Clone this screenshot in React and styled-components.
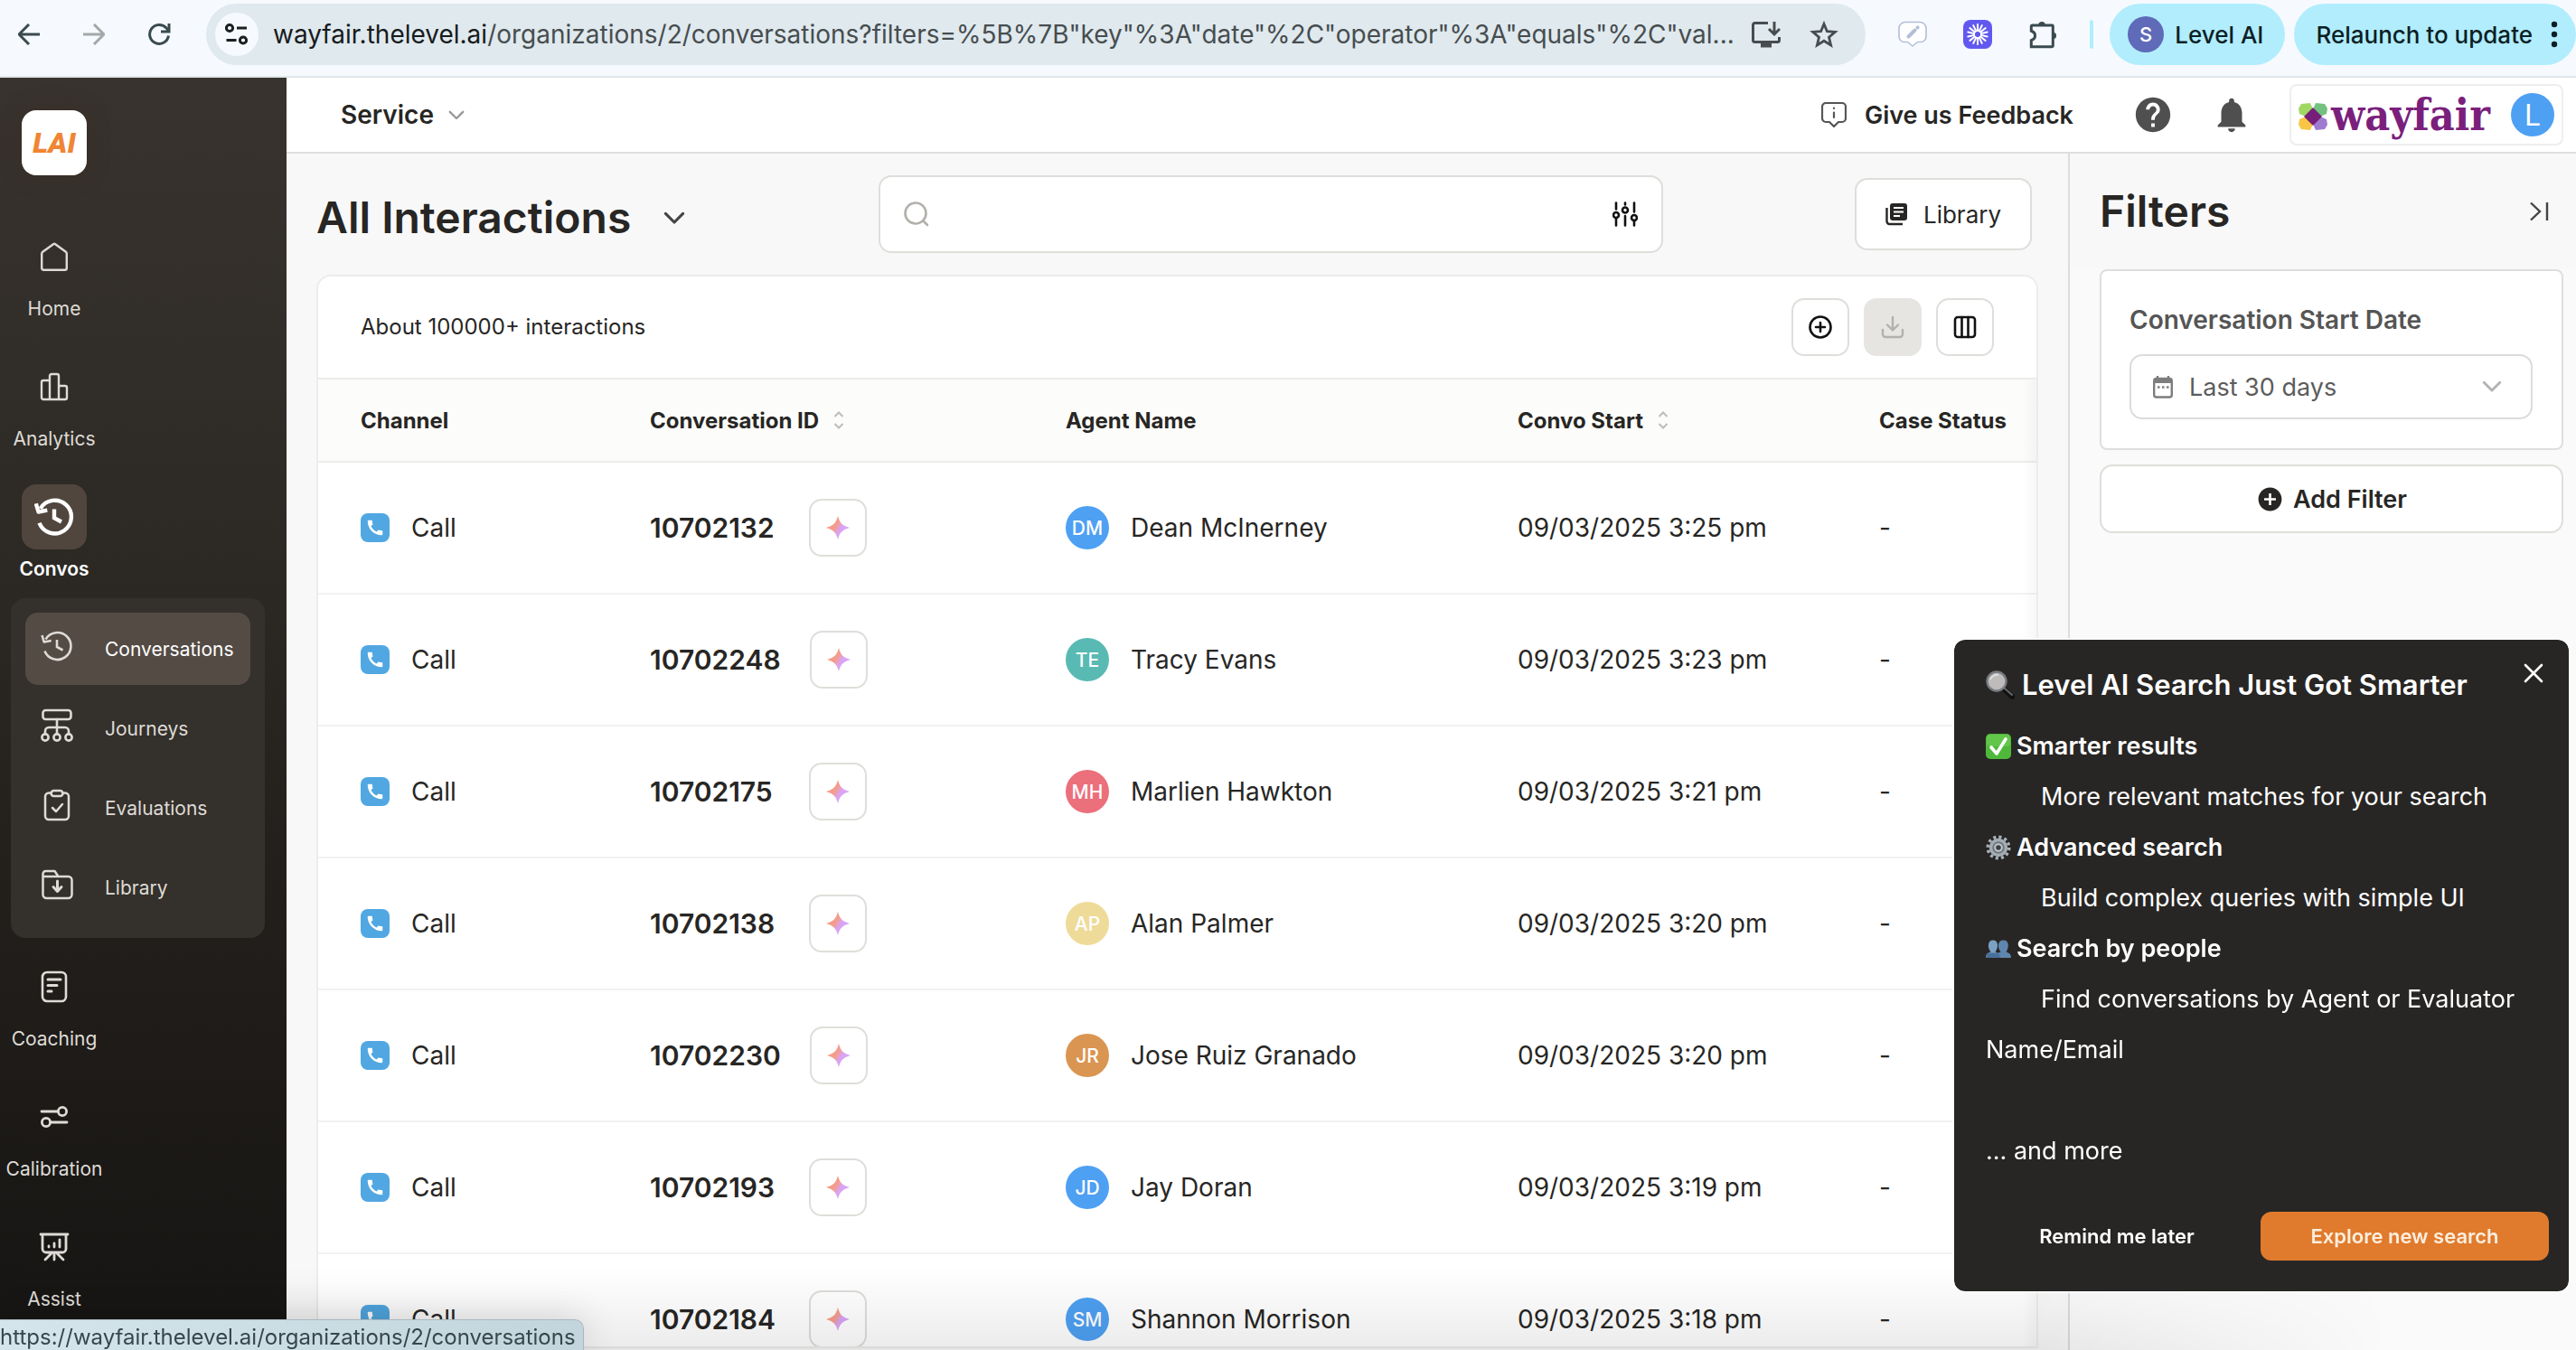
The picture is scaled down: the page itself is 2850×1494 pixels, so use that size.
import React from 'react';
import styled, { createGlobalStyle, css } from 'styled-components';
import { MdHelp, MdNotifications, MdAddCircle, MdCall } from 'react-icons/md';

const GlobalStyle = createGlobalStyle`
  *, *::before, *::after { box-sizing: border-box; }
  html, body { margin: 0; padding: 0; }
  body {
    font-family: Inter, 'Noto Sans', sans-serif;
    font-size: 28px;
    color: #272624;
    background: #f8f8f8;
    overflow: hidden;
  }
  button, input, select { font: inherit; color: inherit; }
  button { cursor: pointer; }
`;

const plainButton = css`
  display: inline-flex;
  align-items: center;
  justify-content: center;
  padding: 0;
  border: 0;
  background: none;
`;

const stroke = {
  fill: 'none',
  stroke: 'currentColor',
  strokeLinecap: 'round',
  strokeLinejoin: 'round',
};

/* ---------- layout ---------- */

const Page = styled.div`
  height: 100vh;
  display: flex;
  flex-direction: column;
  overflow: hidden;
`;

const Body = styled.div`
  flex: 1;
  min-height: 0;
  display: flex;
`;

const Workspace = styled.div`
  flex: 1;
  min-width: 0;
  display: flex;
  flex-direction: column;
`;

const Columns = styled.div`
  flex: 1;
  min-height: 0;
  display: flex;
`;

/* ---------- browser bar ---------- */

const BrowserBar = styled.header`
  display: flex;
  align-items: center;
  height: 86px;
  padding: 0 0 8px 20px;
  background: #f6fafe;
  border-bottom: 2px solid #dfe7ea;
  flex: none;
`;

const NavButtons = styled.div`
  display: flex;
  gap: 48px;
  margin-right: 40px;
`;

const ChromeButton = styled.button`
  ${plainButton}
  width: 24px;
  height: 32px;
  color: ${(p) => (p.$muted ? '#a3a8a8' : '#3a4b50')};
  svg { flex: none; }
`;

const AddressBar = styled.div`
  flex: 1;
  min-width: 0;
  height: 68px;
  padding: 0 30px 0 10px;
  display: flex;
  align-items: center;
  gap: 16px;
  border-radius: 34px;
  background: #dfe9ee;
`;

const SiteInfo = styled.button`
  ${plainButton}
  width: 48px;
  height: 48px;
  border-radius: 50%;
  background: #f6fafe;
  color: #1b1f20;
  flex: none;
`;

const Address = styled.span`
  flex: 1;
  min-width: 0;
  overflow: hidden;
  white-space: nowrap;
  font-size: 28px;
  line-height: 36px;
  color: #474d4f;
  b { font-weight: 400; color: #171b1c; }
`;

const AddressTools = styled.div`
  display: flex;
  align-items: center;
  gap: 32px;
  color: #474d4f;
`;

const ToolButton = styled.button`
  ${plainButton}
  width: 32px;
  height: 32px;
  color: ${(p) => p.$color || 'inherit'};
`;

const Extensions = styled.div`
  display: flex;
  align-items: center;
  gap: 40px;
  margin: 0 18px 0 36px;
`;

const BarDivider = styled.span`
  width: 4px;
  height: 32px;
  margin-left: -4px;
  border-radius: 2px;
  background: #b1edfd;
`;

const ChromePill = styled.button`
  ${plainButton}
  height: 68px;
  padding: 0 24px 0 20px;
  gap: 12px;
  border-radius: 34px;
  background: #b1edfd;
  color: #0c1f25;
  font-size: 26px;
  font-weight: 500;
  white-space: nowrap;
  flex: none;
  & + & { margin-left: 10px; padding: 0 20px 0 24px; gap: 20px; }
`;

const ProfileDot = styled.span`
  width: 40px;
  height: 40px;
  border-radius: 50%;
  background: #5f6ab8;
  color: #fff;
  font-size: 22px;
  line-height: 40px;
  text-align: center;
`;

/* ---------- sidebar ---------- */

const Sidebar = styled.nav`
  width: 317px;
  flex: none;
  padding-top: 36px;
  overflow: hidden;
  background: linear-gradient(#38332e, #2b2823 42%, #231f1c 62%, #161513);
`;

const BrandLink = styled.a`
  display: flex;
  align-items: center;
  justify-content: center;
  width: 72px;
  height: 72px;
  margin: 0 0 54px 24px;
  border-radius: 16px;
  background: #fff;
  color: #f08534;
  font-family: Roboto, 'Liberation Sans', sans-serif;
  font-weight: 900;
  font-style: italic;
  font-size: 32px;
  line-height: 40px;
  text-decoration: none;
  box-shadow: 0 0 24px rgba(70, 40, 30, 0.35);
`;

const NavItem = styled.a`
  display: flex;
  flex-direction: column;
  align-items: center;
  width: 120px;
  height: 126px;
  margin-bottom: ${(p) => (p.$active ? '0' : '18px')};
  color: ${(p) => (p.$active ? '#fff' : '#dedbd6')};
  font-size: 21px;
  font-weight: ${(p) => (p.$active ? 600 : 400)};
  line-height: 44px;
  text-decoration: none;
`;

const NavIcon = styled.span`
  display: flex;
  align-items: center;
  justify-content: center;
  width: 72px;
  height: 72px;
  border-radius: 16px;
  background: ${(p) => (p.$active ? '#50463d' : 'transparent')};
`;

const SubMenu = styled.div`
  display: flex;
  flex-direction: column;
  gap: 8px;
  width: 281px;
  height: 376px;
  margin: 0 0 18px 12px;
  padding: 16px;
  border-radius: 16px;
  background: #34302b;
`;

const SubItem = styled.a`
  display: flex;
  align-items: center;
  height: 80px;
  padding-left: 17px;
  gap: 35px;
  border-radius: 14px;
  background: ${(p) => (p.$active ? '#544b44' : 'transparent')};
  color: ${(p) => (p.$active ? '#fff' : '#dedbd6')};
  font-size: 21px;
  text-decoration: none;
  svg { color: #dedbd6; flex: none; margin-bottom: 6px; }
`;

/* ---------- top bar ---------- */

const TopBar = styled.header`
  display: flex;
  align-items: center;
  height: 84px;
  padding: 0 14px 0 60px;
  background: #fff;
  border-bottom: 2px solid #dfdfdf;
  flex: none;
`;

const Switcher = styled.button`
  ${plainButton}
  gap: 16px;
  font-weight: 600;
  margin-right: auto;
  color: #272624;
  svg { color: #999; }
`;

const Feedback = styled.button`
  ${plainButton}
  gap: 20px;
  margin-right: 65px;
  font-size: 27px;
  font-weight: 600;
  svg { color: #555; }
`;

const RoundTool = styled.button`
  ${plainButton}
  width: 46px;
  height: 46px;
  margin-right: 41px;
  color: #4f4f4f;
`;

const OrgBadge = styled.button`
  ${plainButton}
  justify-content: space-between;
  width: 303px;
  height: 68px;
  padding: 0 8px;
  border: 2px solid #eee;
  border-radius: 8px;
  background: #fff;
`;

const OrgLogo = styled.span`
  display: flex;
  align-items: center;
  gap: 4px;
  color: #7b1f7d;
  font-family: 'DejaVu Serif Condensed', 'DejaVu Serif', serif;
  font-weight: 700;
  font-size: 48px;
  line-height: 48px;
  svg { flex: none; margin-top: 4px; }
`;

const Avatar = styled.span`
  display: inline-flex;
  align-items: center;
  justify-content: center;
  width: 48px;
  height: 48px;
  border-radius: 50%;
  flex: none;
  background: ${(p) => p.$color};
  color: #fff;
  font-size: ${(p) => (p.$large ? '32px' : '21px')};
  font-weight: ${(p) => (p.$large ? 400 : 500)};
`;

/* ---------- main ---------- */

const Main = styled.main`
  flex: 1;
  min-width: 0;
  display: flex;
  flex-direction: column;
  padding: 24px 33px 0;
  background: #f8f8f8;
`;

const TitleRow = styled.div`
  display: grid;
  grid-template-columns: 622px minmax(300px, 868px) 1fr;
  align-items: center;
  height: 86px;
  margin-bottom: 24px;
  flex: none;
`;

const PageTitle = styled.h1`
  display: flex;
  align-items: center;
  gap: 36px;
  margin: 8px 0 0;
  font-size: 48px;
  line-height: 60px;
  font-weight: 600;
`;

const ChevronButton = styled.button`
  ${plainButton}
  color: #444;
`;

const SearchBox = styled.div`
  display: flex;
  align-items: center;
  height: 86px;
  padding: 0 26px;
  gap: 16px;
  border: 2px solid #dfdeda;
  border-radius: 14px;
  background: #fff;
  color: #b3b0ac;
  input {
    flex: 1;
    min-width: 0;
    border: 0;
    outline: 0;
    background: none;
    color: #272624;
  }
`;

const IconOnly = styled.button`
  ${plainButton}
  color: #111;
`;

const LibraryButton = styled.button`
  ${plainButton}
  justify-self: end;
  width: 196px;
  height: 80px;
  margin-right: 7px;
  gap: 18px;
  border: 2px solid #dfdeda;
  border-radius: 14px;
  background: #fff;
  font-size: 26px;
`;

const Card = styled.section`
  flex: 1;
  min-height: 0;
  position: relative;
  margin-bottom: 2px;
  overflow: hidden;
  border: 2px solid #ececea;
  border-radius: 16px 16px 0 0;
  background: #fff;
  &::after {
    content: '';
    position: absolute;
    top: 114px;
    right: 0;
    bottom: 0;
    width: 16px;
    background: linear-gradient(to right, rgba(0, 0, 0, 0), rgba(0, 0, 0, 0.03));
  }
`;

const CardTools = styled.div`
  display: flex;
  align-items: center;
  gap: 16px;
  height: 112px;
  padding: 0 47px;
  p { margin: 0 auto 0 0; font-size: 24px; line-height: 32px; }
`;

const SquareButton = styled.button`
  ${plainButton}
  width: 64px;
  height: 64px;
  flex: none;
  border: 2px solid ${(p) => (p.disabled ? '#e6e5e1' : '#dfdeda')};
  border-radius: 14px;
  background: ${(p) => (p.disabled ? '#e6e5e1' : '#fff')};
  color: ${(p) => (p.disabled ? '#b3b1ad' : '#111')};
`;

const Table = styled.table`
  width: 100%;
  table-layout: fixed;
  border-collapse: separate;
  border-spacing: 0;
  th, td {
    padding: 0 0 0 16px;
    text-align: left;
    white-space: nowrap;
  }
  th:first-child, td:first-child { padding-left: 47px; }
  th {
    height: 94px;
    border-top: 2px solid #ececea;
    border-bottom: 2px solid #ececea;
    background: #fcfcfa;
    font-size: 24px;
    font-weight: 700;
  }
  td {
    height: 146px;
    border-bottom: 2px solid #f2f2f1;
  }
`;

const Col = styled.col`
  width: ${(p) => p.$w};
`;

const Cell = styled.div`
  display: flex;
  align-items: center;
  gap: ${(p) => p.$gap || 24}px;
`;

const PhoneTile = styled.span`
  display: inline-flex;
  align-items: center;
  justify-content: center;
  width: 32px;
  height: 32px;
  border-radius: 8px;
  background: #51a7e1;
  color: #fff;
`;

const IdText = styled.span`
  min-width: 144px;
  font-size: 30px;
  font-weight: 600;
`;

/* ---------- filters ---------- */

const FilterPanel = styled.aside`
  width: 562px;
  flex: none;
  border-left: 2px solid #dcdcdc;
  background: #fafafa;
`;

const PanelHead = styled.div`
  display: flex;
  align-items: center;
  justify-content: space-between;
  height: 128px;
  padding: 0 30px 0 33px;
  background: #f8f8f8;
  color: #6a6a6a;
  h2 {
    margin: 0;
    font-size: 48px;
    line-height: 60px;
    font-weight: 600;
    color: #272624;
  }
`;

const PanelBody = styled.div`
  display: flex;
  flex-direction: column;
  gap: 16px;
  padding: 0 14px 0 33px;
`;

const FilterCard = styled.div`
  padding: 36px 32px 24px 31px;
  height: 200px;
  border: 2px solid #dedede;
  border-radius: 8px;
  background: #fff;
  label {
    display: block;
    margin-bottom: 20px;
    font-size: 28px;
    line-height: 36px;
    font-weight: 600;
    color: #555;
  }
`;

const SelectWrap = styled.div`
  display: grid;
  grid-template-columns: 46px 1fr 34px;
  align-items: center;
  height: 72px;
  border: 2px solid #dcdcdc;
  border-radius: 14px;
  color: #b3b3b3;
  > svg { grid-row: 1; pointer-events: none; }
  > svg:first-of-type { grid-column: 1; justify-self: end; color: #7d7d7d; }
  > svg:last-of-type { grid-column: 3; justify-self: start; margin-left: -20px; }
  select {
    grid-row: 1;
    grid-column: 1 / -1;
    width: 100%;
    height: 100%;
    padding: 0 50px 0 64px;
    border: 0;
    background: none;
    appearance: none;
    font-size: 27px;
    color: #5c5c5c;
  }
`;

const AddFilter = styled.button`
  ${plainButton}
  height: 76px;
  gap: 10px;
  border: 2px solid #dfdeda;
  border-radius: 14px;
  background: #fff;
  font-size: 27px;
  font-weight: 600;
`;

/* ---------- overlays ---------- */

const Announcement = styled.aside`
  position: fixed;
  right: 8px;
  bottom: 65px;
  width: 680px;
  padding: 28px 22px 34px 35px;
  border-radius: 12px;
  background: #282624;
  color: #fff;
  outline: 2px solid rgba(255, 255, 255, 0.8);
`;

const AnnounceTitle = styled.h3`
  display: flex;
  align-items: center;
  gap: 8px;
  margin: 0 0 18px;
  font-size: 31px;
  line-height: 44px;
  font-weight: 600;
`;

const CloseButton = styled.button`
  ${plainButton}
  position: absolute;
  top: 24px;
  right: 26px;
  width: 26px;
  height: 26px;
`;

const Feature = styled.h4`
  display: flex;
  align-items: center;
  gap: 6px;
  margin: 0;
  font-size: 27px;
  line-height: 56px;
  font-weight: 600;
`;

const Detail = styled.p`
  margin: 0;
  font-size: 27px;
  font-weight: 400;
  line-height: 56px;
  text-indent: ${(p) => (p.$flush ? '0' : '61px')};
`;

const Actions = styled.div`
  display: flex;
  align-items: center;
  justify-content: flex-end;
  gap: 28px;
  margin-top: 39px;
`;

const Action = styled.button`
  ${plainButton}
  width: ${(p) => (p.$primary ? '319px' : '262px')};
  height: 54px;
  border-radius: 12px;
  background: ${(p) => (p.$primary ? '#e07b2d' : 'transparent')};
  color: ${(p) => (p.$primary ? '#fdeede' : '#fff')};
  font-size: 22px;
  font-weight: 600;
`;

const StatusBubble = styled.div`
  position: fixed;
  left: 0;
  bottom: 0;
  height: 34px;
  padding-right: 8px;
  border-top: 1px solid #a9b8be;
  border-right: 1px solid #a9b8be;
  border-top-right-radius: 10px;
  background: linear-gradient(to right, #d4e6ec, #c3d5dc);
  color: #37474c;
  font-size: 24px;
  line-height: 38px;
  white-space: nowrap;
  box-shadow: 0 0 40px rgba(0, 0, 0, 0.16);
`;

const BottomShade = styled.div`
  position: fixed;
  left: 317px;
  right: 0;
  bottom: 0;
  height: 90px;
  pointer-events: none;
  background: linear-gradient(rgba(0, 0, 0, 0), rgba(0, 0, 0, 0.08));
  mask-image: linear-gradient(to right, #000 76%, transparent 92%);
`;

/* ---------- icons ---------- */

const Chevron = ({ w = 18, sw = 2.6 }) => (
  <svg width={w} height={w * 0.6} viewBox="0 0 20 12" {...stroke} strokeWidth={sw}>
    <path d="M2 2l8 8 8-8" />
  </svg>
);

const BackIcon = ({ flip }) => (
  <svg width="24" height="24" viewBox="0 0 24 24" fill="none" stroke="currentColor" strokeWidth="3">
    {flip ? <path d="M0 12h22M12 1l11 11-11 11" /> : <path d="M24 12H2M12 1L1 12l11 11" />}
  </svg>
);

const ReloadIcon = () => (
  <svg width="26" height="26" viewBox="0 0 26 26" fill="none" stroke="currentColor" strokeWidth="3">
    <path d="M23.5 14.5A10.5 10.5 0 1 1 21 6l2.500 2.500M24 1v9h-9" />
  </svg>
);

const TuneIcon = () => (
  <svg width="26" height="26" viewBox="0 0 26 26" fill="none" stroke="currentColor" strokeWidth="3">
    <circle cx="5" cy="6" r="3.600" />
    <path d="M13 6h11M1.500 19.500h11" />
    <circle cx="20" cy="19.500" r="3.600" />
  </svg>
);

const InstallIcon = () => (
  <svg width="32" height="32" viewBox="0 0 32 32" fill="none" stroke="currentColor" strokeWidth="3">
    <path d="M18 3.500H3.500a2 2 0 0 0-2 2v17a2 2 0 0 0 2 2h25a2 2 0 0 0 2-2V19M25 2v13M19 10l6 6 6-6" />
    <path d="M10 28h12" strokeWidth="5" />
  </svg>
);

const StarIcon = () => (
  <svg width="32" height="32" viewBox="0 0 32 32" fill="none" stroke="currentColor" strokeWidth="2.800">
    <path d="M16 4.500l3.400 8.200 8.900.700-6.800 5.800 2.100 8.700L16 23.200l-7.600 4.700 2.100-8.700-6.800-5.800 8.900-.700z" />
  </svg>
);

const PencilBubble = () => (
  <svg width="32" height="32" viewBox="0 0 32 32" {...stroke} strokeWidth="1.600">
    <path fill="#fff" d="M8 2.500h16a7 7 0 0 1 7 7v9a6 6 0 0 1-6 6h-3.500L16 29l-5.500-4.500H7a6 6 0 0 1-6-6v-9a7 7 0 0 1 7-7z" />
    <path d="M11.500 18.500l7-7" strokeWidth="4" />
    <path d="M21.500 8.500l.1-.1" strokeWidth="4" />
  </svg>
);

const BurstIcon = () => (
  <svg width="32" height="32" viewBox="0 0 32 32">
    <rect width="32" height="32" rx="8" fill="#6159ef" />
    {Array.from({ length: 14 }, (_, i) => (
      <path key={i} d="M16 5v7" stroke="#fff" strokeWidth="2" strokeLinecap="round" transform={`rotate(${(i * 360) / 14} 16 16)`} />
    ))}
    <circle cx="16" cy="16" r="4.200" fill="none" stroke="#fff" strokeWidth="1.800" />
  </svg>
);

const PuzzleIcon = () => (
  <svg width="34" height="34" viewBox="0 0 34 34" fill="none" stroke="currentColor" strokeWidth="3.200">
    <path d="M5 6.500h23a1 1 0 0 1 1 1v23a1 1 0 0 1-1 1H3.500V24c3-1 4.500-3 4.500-5.500S6.500 14 3.500 13V8a1.500 1.500 0 0 1 1.500-1.500z" />
    <path d="M12 6a4 4 0 0 1 8 0zM29 14.500a4 4 0 0 1 0 8z" fill="currentColor" stroke="none" />
  </svg>
);

const DotsIcon = () => (
  <svg width="8" height="32" viewBox="0 0 8 32" fill="currentColor">
    <circle cx="4" cy="5" r="3.200" /><circle cx="4" cy="16" r="3.200" /><circle cx="4" cy="27" r="3.200" />
  </svg>
);

const HomeIcon = () => (
  <svg width="34" height="34" viewBox="0 0 34 34" {...stroke} strokeWidth="2.400">
    <path d="M3.200 13.500a2 2 0 0 1 1-1.700L16 3.200a2 2 0 0 1 2.200 0l11.700 8.600a2 2 0 0 1 .9 1.700v16.300a2 2 0 0 1-2 2H5.200a2 2 0 0 1-2-2z" />
  </svg>
);

const BarsIcon = () => (
  <svg width="34" height="34" viewBox="0 0 34 34" {...stroke} strokeWidth="2.400">
    <path d="M12 31H5a2 2 0 0 1-2-2V12a2 2 0 0 1 2-2h7M12 31V5a2 2 0 0 1 2-2h6a2 2 0 0 1 2 2v26zM22 16h7a2 2 0 0 1 2 2v11a2 2 0 0 1-2 2h-7" />
  </svg>
);

const HistoryIcon = ({ size = 36, sw = 2.6 }) => (
  <svg width={size} height={size} viewBox="0 0 36 36" fill="none" stroke="currentColor" strokeWidth={sw}>
    <path d="M4.500 23.500A15 15 0 1 0 5.500 10.500" />
    <path d="M1.500 6l2.200 7.500 8-1.500" strokeLinejoin="round" />
    <path d="M18 11v8l6.500 3.500" />
  </svg>
);

const JourneyIcon = () => (
  <svg width="36" height="38" viewBox="0 0 36 38" {...stroke} strokeWidth="2.600">
    <rect x="2.500" y="2" width="31" height="10" rx="3" />
    <path d="M18 12v16M5 28v-3a4 4 0 0 1 4-4h18a4 4 0 0 1 4 4v3" />
    <circle cx="5" cy="32" r="3.600" /><circle cx="18" cy="32" r="3.600" /><circle cx="31" cy="32" r="3.600" />
  </svg>
);

const ClipboardIcon = () => (
  <svg width="36" height="36" viewBox="0 0 36 36" {...stroke} strokeWidth="2.500">
    <path d="M12 4.500H9a4 4 0 0 0-4 4V30a4 4 0 0 0 4 4h18a4 4 0 0 0 4-4V8.500a4 4 0 0 0-4-4h-3" />
    <rect x="11.500" y="2" width="13" height="6" rx="3" />
    <path d="M13 21l4 4 7-8" />
  </svg>
);

const FolderIcon = () => (
  <svg width="36" height="34" viewBox="0 0 36 34" {...stroke} strokeWidth="2.500">
    <path d="M2.500 28V5a3 3 0 0 1 3-3h10l4 6h11a4 4 0 0 1 4 4v16a4 4 0 0 1-4 4h-24a4 4 0 0 1-4-4zM2.500 8h17" />
    <path d="M18.500 13v10M14 19.500l4.500 5 4.500-5" strokeWidth="3" />
  </svg>
);

const DocIcon = () => (
  <svg width="30" height="36" viewBox="0 0 30 36" {...stroke} strokeWidth="2.600">
    <rect x="2" y="2" width="26" height="32" rx="5" />
    <path d="M8 10h14M8 16.500h10M8 23h4" strokeWidth="3" />
  </svg>
);

const CalibrateIcon = () => (
  <svg width="32" height="28" viewBox="0 0 32 28" {...stroke} strokeWidth="2.800">
    <path d="M2 8h18M12 20h18" />
    <circle cx="25" cy="8" r="4.600" /><circle cx="7" cy="20" r="4.600" />
  </svg>
);

const BoardIcon = () => (
  <svg width="34" height="36" viewBox="0 0 34 36" {...stroke} strokeWidth="2.800">
    <path d="M2 4h30M4 4v16a4 4 0 0 0 4 4h18a4 4 0 0 0 4-4V4M17 24v8M14 25l-7 7M20 25l7 7" />
    <path d="M11 18v-1M17 18v-4M23 18V10" />
  </svg>
);

const InfoBubble = () => (
  <svg width="28" height="30" viewBox="0 0 28 30" {...stroke} strokeWidth="2.200">
    <path d="M5 2h18a4 4 0 0 1 4 4v13a4 4 0 0 1-4 4h-4l-5 5-5-5H5a4 4 0 0 1-4-4V6a4 4 0 0 1 4-4zM14 12.500v5.500M14 7.500v.5" />
  </svg>
);

const FlowerIcon = () => (
  <svg width="32" height="32" viewBox="0 0 32 32">
    <path d="M3 2l10-1 3 7-8 8-7-3-1-6z" fill="#a1d863" />
    <path d="M29 2L19 1l-3 7 8 8 7-3 1-6z" fill="#73c17f" />
    <path d="M3 30l10 1 3-7-8-8-7 3-1 6z" fill="#f8c644" />
    <path d="M29 30l-10 1-3-7 8-8 7 3 1 6z" fill="#9e7bd0" />
    <path d="M16 6l10 10-10 10L6 16z" fill="#751f78" />
  </svg>
);

const SearchIcon = () => (
  <svg width="28" height="28" viewBox="0 0 28 28" {...stroke} strokeWidth="2.600">
    <circle cx="13" cy="13" r="11.500" /><path d="M21.500 21.500l4.500 4.500" />
  </svg>
);

const SlidersIcon = () => (
  <svg width="28" height="28" viewBox="0 0 28 28" {...stroke} strokeWidth="2.600">
    <path d="M4 1.500v7M4 18v8.500M14 1.500v2M14 16v10.500M24 1.500v10M24 21v5.500" />
    <circle cx="4" cy="15" r="3" /><circle cx="14" cy="9.500" r="3" /><circle cx="24" cy="18" r="3" />
  </svg>
);

const LibraryIcon = () => (
  <svg width="24" height="26" viewBox="0 0 24 26">
    <path d="M1.500 6v15a3 3 0 0 0 3 3H19" fill="none" stroke="#272624" strokeWidth="2.400" />
    <rect x="5" y="1" width="19" height="19" rx="3" fill="#272624" />
    <path d="M9 6h11M9 10.500h11M9 15h7" stroke="#fff" strokeWidth="2" />
  </svg>
);

const PlusCircle = () => (
  <svg width="28" height="28" viewBox="0 0 28 28" {...stroke} strokeWidth="2.600">
    <circle cx="14" cy="14" r="11.500" /><path d="M14 9v10M9 14h10" />
  </svg>
);

const DownloadIcon = () => (
  <svg width="26" height="26" viewBox="0 0 26 26" {...stroke} strokeWidth="2.400">
    <path d="M13 2v14M7 10.500l6 6 6-6M2 16v5a3 3 0 0 0 3 3h16a3 3 0 0 0 3-3v-5" />
  </svg>
);

const ColumnsIcon = () => (
  <svg width="26" height="26" viewBox="0 0 26 26" {...stroke} strokeWidth="2.600">
    <rect x="2" y="2" width="22" height="22" rx="3" /><path d="M9.500 2v22M16.500 2v22" />
  </svg>
);

const SortIcon = () => (
  <svg width="12" height="22" viewBox="0 0 12 22" fill="none" stroke="#bdbdbb" strokeWidth="2">
    <path d="M1.500 7L6 2.500 10.500 7M1.500 15L6 19.500 10.500 15" />
  </svg>
);

const SparkIcon = () => (
  <svg width="26" height="26" viewBox="0 0 26 26">
    <defs>
      <linearGradient id="spark" x1="0.100" y1="0.250" x2="0.900" y2="0.750">
        <stop offset="0.350" stopColor="#f59c88" />
        <stop offset="0.650" stopColor="#d9a4f8" />
      </linearGradient>
    </defs>
    <path d="M13 0c2 7.500 4.500 10.500 13 13-8.500 2.500-11 5.500-13 13-2-7.500-4.500-10.500-13-13 8.500-2.500 11-5.500 13-13z" fill="url(#spark)" />
  </svg>
);

const CollapseIcon = () => (
  <svg width="22" height="22" viewBox="0 0 22 22" fill="none" stroke="currentColor" strokeWidth="2.400">
    <path d="M2 1.500l10 9.500-10 9.500M20 1v20" />
  </svg>
);

const CalendarIcon = () => (
  <svg width="22" height="26" viewBox="0 0 22 26">
    <path d="M5 1v4M17 1v4" stroke="currentColor" strokeWidth="2.400" />
    <rect x="1.200" y="4" width="19.600" height="20.500" rx="2.500" fill="none" stroke="currentColor" strokeWidth="2.400" />
    <path d="M1 4h20v5H1z" fill="currentColor" />
    <path d="M5 13.500h2.500M10 13.500h2.500M15 13.500h2.500" stroke="currentColor" strokeWidth="2.500" />
  </svg>
);

const CloseIcon = () => (
  <svg width="22" height="22" viewBox="0 0 22 22" {...stroke} strokeWidth="2.600">
    <path d="M2 2l18 18M20 2L2 20" />
  </svg>
);

const MagnifierArt = () => (
  <svg width="32" height="32" viewBox="0 0 32 32">
    <path d="M19 19l10 10" stroke="#111" strokeWidth="6" strokeLinecap="round" />
    <path d="M19 18l10 9" stroke="#666" strokeWidth="2" strokeLinecap="round" />
    <circle cx="12" cy="12" r="10.500" fill="#bdbcba" stroke="#777b80" strokeWidth="2.400" />
    <path d="M5 10a8 8 0 0 1 9-5" stroke="#dedede" strokeWidth="2" fill="none" />
  </svg>
);

const CheckArt = () => (
  <svg width="28" height="28" viewBox="0 0 28 28">
    <rect width="28" height="28" rx="5" fill="#4fb83a" />
    <rect x="1" y="1" width="26" height="13" rx="4" fill="#62c64b" />
    <path d="M6 15l6 7L22 6" fill="none" stroke="#fff" strokeWidth="3.600" strokeLinecap="round" strokeLinejoin="round" />
  </svg>
);

const GearArt = () => (
  <svg width="28" height="28" viewBox="0 0 28 28">
    <circle cx="14" cy="14" r="11.800" fill="none" stroke="#a9b3ba" strokeWidth="3.400" strokeDasharray="3.100 3.080" />
    <circle cx="14" cy="14" r="8.500" fill="#6f767c" stroke="#a4adb4" strokeWidth="3.400" />
    <circle cx="14" cy="14" r="3.800" fill="#3a3e42" stroke="#c0c7cc" strokeWidth="2" />
  </svg>
);

const PeopleArt = () => (
  <svg width="28" height="28" viewBox="0 0 28 28">
    <path d="M11 24c0-5 3-5.500 5.500-6.500C12.500 12.500 13 4.500 19.500 4.500s6.500 8 3 13c2.500 1 5.500 1.500 5.500 6.500z" fill="#5f86ae" />
    <path d="M0 24c0-5 3-5.500 5.500-6.500C1.500 12.500 2 4.500 8 4.500s6.500 8 2.500 13c2.500 1 5.500 1.500 5.500 6.500z" fill="#7ba1c4" />
    <path d="M0 24c0-3 1-4.500 3-5.500h10c2 1 3 2.500 3 5.500z" fill="#48709b" />
  </svg>
);

/* ---------- data ---------- */

const navTop = [
  { label: 'Home', icon: <HomeIcon /> },
  { label: 'Analytics', icon: <BarsIcon /> },
  { label: 'Convos', icon: <HistoryIcon size={44} sw={3.6} />, active: true },
];

const subNav = [
  { label: 'Conversations', icon: <HistoryIcon />, active: true },
  { label: 'Journeys', icon: <JourneyIcon /> },
  { label: 'Evaluations', icon: <ClipboardIcon /> },
  { label: 'Library', icon: <FolderIcon /> },
];

const navBottom = [
  { label: 'Coaching', icon: <DocIcon /> },
  { label: 'Calibration', icon: <CalibrateIcon /> },
  { label: 'Assist', icon: <BoardIcon /> },
];

const rows = [
  ['10702132', 'DM', '#4ea0f3', 'Dean McInerney', '09/03/2025 3:25 pm'],
  ['10702248', 'TE', '#59bab3', 'Tracy Evans', '09/03/2025 3:23 pm'],
  ['10702175', 'MH', '#ec6f7c', 'Marlien Hawkton', '09/03/2025 3:21 pm'],
  ['10702138', 'AP', '#efdb99', 'Alan Palmer', '09/03/2025 3:20 pm'],
  ['10702230', 'JR', '#da9552', 'Jose Ruiz Granado', '09/03/2025 3:20 pm'],
  ['10702193', 'JD', '#4ea0f3', 'Jay Doran', '09/03/2025 3:19 pm'],
  ['10702184', 'SM', '#4ea0f3', 'Shannon Morrison', '09/03/2025 3:18 pm'],
];

const NavLink = ({ item }) => (
  <NavItem href="#" $active={item.active}>
    <NavIcon $active={item.active}>{item.icon}</NavIcon>
    {item.label}
  </NavItem>
);

export default function App() {
  return (
    <Page>
      <GlobalStyle />
      <BrowserBar>
        <NavButtons>
          <ChromeButton aria-label="Back"><BackIcon /></ChromeButton>
          <ChromeButton aria-label="Forward" $muted><BackIcon flip /></ChromeButton>
          <ChromeButton aria-label="Reload"><ReloadIcon /></ChromeButton>
        </NavButtons>
        <AddressBar>
          <SiteInfo aria-label="Site information"><TuneIcon /></SiteInfo>
          <Address>
            <b>wayfair.thelevel.ai</b>/organizations/2/conversations?filters=%5B%7B"key"%3A"date"%2C"operator"%3A"equals"%2C"val...
          </Address>
          <AddressTools>
            <ToolButton aria-label="Install app"><InstallIcon /></ToolButton>
            <ToolButton aria-label="Bookmark"><StarIcon /></ToolButton>
          </AddressTools>
        </AddressBar>
        <Extensions>
          <ToolButton aria-label="Notes" $color="#b3bfd6"><PencilBubble /></ToolButton>
          <ToolButton aria-label="Assistant"><BurstIcon /></ToolButton>
          <ToolButton aria-label="Extensions" $color="#3a4b50"><PuzzleIcon /></ToolButton>
          <BarDivider />
        </Extensions>
        <ChromePill><ProfileDot>S</ProfileDot>Level AI</ChromePill>
        <ChromePill>Relaunch to update<DotsIcon /></ChromePill>
      </BrowserBar>

      <Body>
        <Sidebar>
          <BrandLink href="#">LAI</BrandLink>
          {navTop.map((item) => <NavLink key={item.label} item={item} />)}
          <SubMenu>
            {subNav.map((item) => (
              <SubItem key={item.label} href="#" $active={item.active}>
                {item.icon}
                {item.label}
              </SubItem>
            ))}
          </SubMenu>
          {navBottom.map((item) => <NavLink key={item.label} item={item} />)}
        </Sidebar>

        <Workspace>
          <TopBar>
            <Switcher>Service<Chevron /></Switcher>
            <Feedback><InfoBubble />Give us Feedback</Feedback>
            <RoundTool aria-label="Help"><MdHelp size={46} /></RoundTool>
            <RoundTool aria-label="Notifications"><MdNotifications size={46} /></RoundTool>
            <OrgBadge>
              <OrgLogo><FlowerIcon />wayfair</OrgLogo>
              <Avatar $color="#4ea0f3" $large>L</Avatar>
            </OrgBadge>
          </TopBar>

          <Columns>
            <Main>
              <TitleRow>
                <PageTitle>
                  All Interactions
                  <ChevronButton aria-label="Switch view"><Chevron w={24} /></ChevronButton>
                </PageTitle>
                <SearchBox>
                  <SearchIcon />
                  <input type="search" aria-label="Search interactions" />
                  <IconOnly aria-label="Search options"><SlidersIcon /></IconOnly>
                </SearchBox>
                <LibraryButton><LibraryIcon />Library</LibraryButton>
              </TitleRow>

              <Card>
                <CardTools>
                  <p>About 100000+ interactions</p>
                  <SquareButton aria-label="Add"><PlusCircle /></SquareButton>
                  <SquareButton aria-label="Download" disabled><DownloadIcon /></SquareButton>
                  <SquareButton aria-label="Columns"><ColumnsIcon /></SquareButton>
                </CardTools>
                <Table>
                  <colgroup>
                    <Col $w="351px" />
                    <Col $w="460px" />
                    <Col $w="500px" />
                    <Col $w="400px" />
                    <Col $w="auto" />
                  </colgroup>
                  <thead>
                    <tr>
                      <th>Channel</th>
                      <th><Cell $gap={16}>Conversation ID<SortIcon /></Cell></th>
                      <th>Agent Name</th>
                      <th><Cell $gap={16}>Convo Start<SortIcon /></Cell></th>
                      <th>Case Status</th>
                    </tr>
                  </thead>
                  <tbody>
                    {rows.map(([id, initials, color, name, start]) => (
                      <tr key={id}>
                        <td><Cell><PhoneTile><MdCall size={22} /></PhoneTile>Call</Cell></td>
                        <td>
                          <Cell $gap={32}>
                            <IdText>{id}</IdText>
                            <SquareButton aria-label={`Summary of ${id}`}><SparkIcon /></SquareButton>
                          </Cell>
                        </td>
                        <td><Cell><Avatar $color={color}>{initials}</Avatar>{name}</Cell></td>
                        <td>{start}</td>
                        <td>-</td>
                      </tr>
                    ))}
                  </tbody>
                </Table>
              </Card>
            </Main>

            <FilterPanel>
              <PanelHead>
                <h2>Filters</h2>
                <ChevronButton aria-label="Collapse filters"><CollapseIcon /></ChevronButton>
              </PanelHead>
              <PanelBody>
                <FilterCard>
                  <label htmlFor="start-date">Conversation Start Date</label>
                  <SelectWrap>
                    <CalendarIcon />
                    <select id="start-date" defaultValue="30">
                      <option value="30">Last 30 days</option>
                    </select>
                    <Chevron w={22} />
                  </SelectWrap>
                </FilterCard>
                <AddFilter><MdAddCircle size={31} />Add Filter</AddFilter>
              </PanelBody>
            </FilterPanel>
          </Columns>
        </Workspace>
      </Body>

      <BottomShade />
      <Announcement>
        <AnnounceTitle><MagnifierArt />Level AI Search Just Got Smarter</AnnounceTitle>
        <CloseButton aria-label="Close"><CloseIcon /></CloseButton>
        <Feature><CheckArt />Smarter results</Feature>
        <Detail>More relevant matches for your search</Detail>
        <Feature><GearArt />Advanced search</Feature>
        <Detail>Build complex queries with simple UI</Detail>
        <Feature><PeopleArt />Search by people</Feature>
        <Detail>Find conversations by Agent or Evaluator Name/Email</Detail>
        <Detail $flush>&nbsp;</Detail>
        <Detail $flush>... and more</Detail>
        <Actions>
          <Action>Remind me later</Action>
          <Action $primary>Explore new search</Action>
        </Actions>
      </Announcement>
      <StatusBubble>https://wayfair.thelevel.ai/organizations/2/conversations</StatusBubble>
    </Page>
  );
}
